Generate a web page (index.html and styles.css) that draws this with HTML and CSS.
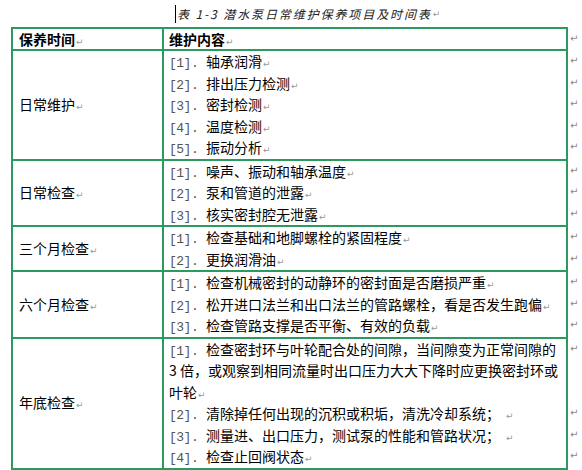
FILE: index.html
```html
<!DOCTYPE html>
<html>
<head>
<meta charset="utf-8">
<link rel="stylesheet" href="styles.css">
</head>
<body>
<div class="caption"><span class="cursor"></span><span class="cap-text">表 1-3 潜水泵日常维护保养项目及时间表</span><span class="pm">↵</span></div>
<table class="tbl">
  <colgroup><col class="c1"><col class="c2"><col class="c3"></colgroup>
  <tr class="head">
    <td class="k">保养时间<span class="pm">↵</span></td>
    <td class="v">维护内容<span class="pm">↵</span></td>
    <td class="m">↵</td>
  </tr>
  <tr>
    <td class="k">日常维护<span class="pm">↵</span></td>
    <td class="v">
      <p><span class="n">[1].</span>轴承润滑<span class="pm">↵</span></p>
      <p><span class="n">[2].</span>排出压力检测<span class="pm">↵</span></p>
      <p><span class="n">[3].</span>密封检测<span class="pm">↵</span></p>
      <p><span class="n">[4].</span>温度检测<span class="pm">↵</span></p>
      <p><span class="n">[5].</span>振动分析<span class="pm">↵</span></p>
    </td>
    <td class="m">↵<br>↵<br>↵<br>↵<br>↵</td>
  </tr>
  <tr>
    <td class="k">日常检查<span class="pm">↵</span></td>
    <td class="v">
      <p><span class="n">[1].</span>噪声、振动和轴承温度<span class="pm">↵</span></p>
      <p><span class="n">[2].</span>泵和管道的泄露<span class="pm">↵</span></p>
      <p><span class="n">[3].</span>核实密封腔无泄露<span class="pm">↵</span></p>
    </td>
    <td class="m">↵<br>↵<br>↵</td>
  </tr>
  <tr>
    <td class="k">三个月检查<span class="pm">↵</span></td>
    <td class="v">
      <p><span class="n">[1].</span>检查基础和地脚螺栓的紧固程度<span class="pm">↵</span></p>
      <p><span class="n">[2].</span>更换润滑油<span class="pm">↵</span></p>
    </td>
    <td class="m">↵<br>↵</td>
  </tr>
  <tr>
    <td class="k">六个月检查<span class="pm">↵</span></td>
    <td class="v">
      <p><span class="n">[1].</span>检查机械密封的动静环的密封面是否磨损严重<span class="pm">↵</span></p>
      <p><span class="n">[2].</span>松开进口法兰和出口法兰的管路螺栓，看是否发生跑偏<span class="pm">↵</span></p>
      <p><span class="n">[3].</span>检查管路支撑是否平衡、有效的负载<span class="pm">↵</span></p>
    </td>
    <td class="m">↵<br>↵<br>↵</td>
  </tr>
  <tr>
    <td class="k">年底检查<span class="pm">↵</span></td>
    <td class="v">
      <p><span class="n">[1].</span>检查密封环与叶轮配合处的间隙，当间隙变为正常间隙的<br>3 倍，或观察到相同流量时出口压力大大下降时应更换密封环或<br>叶轮<span class="pm">↵</span></p>
      <p><span class="n">[2].</span>清除掉任何出现的沉积或积垢，清洗冷却系统；<span class="pm sp">↵</span></p>
      <p><span class="n">[3].</span>测量进、出口压力，测试泵的性能和管路状况；<span class="pm sp">↵</span></p>
      <p><span class="n">[4].</span>检查止回阀状态<span class="pm">↵</span></p>
    </td>
    <td class="m">↵<br>&nbsp;<br>&nbsp;<br>↵<br>↵<br>↵</td>
  </tr>
</table>
</body>
</html>
```
FILE: styles.css
```css
html, body {
  margin: 0;
  padding: 0;
  background: #ffffff;
}
body {
  font-family: "Noto Sans CJK SC", "Liberation Sans", sans-serif;
  color: #000;
}
.caption {
  height: 27px;
  padding-left: 175px;
  display: flex;
  align-items: center;
  font-size: 12px;
  color: #222;
}
.cursor {
  display: inline-block;
  width: 1px;
  height: 18px;
  background: #000;
  margin-right: 1px;
}
.cap-text {
  font-style: italic;
  letter-spacing: 1.9px;
  line-height: 18px;
}
.tbl {
  margin-left: 11px;
  border-collapse: collapse;
  table-layout: fixed;
  width: 571px;
  font-size: 14px;
  line-height: 21.5px;
}
.c1 { width: 151px; }
.c2 { width: 404px; }
.c3 { width: 16px; }
.tbl td {
  padding: 0;
}
.tbl td.k, .tbl td.v {
  border: 2px solid #2a9a5e;
}
.tbl td.k {
  padding-left: 6px;
  vertical-align: middle;
}
.tbl td.v {
  padding-left: 5px;
  vertical-align: top;
}
.tbl td.m {
  border: none;
  vertical-align: top;
  padding-left: 2px;
  font-size: 10px;
  color: #8a8a8a;
  line-height: 21.5px;
  font-family: "DejaVu Sans", sans-serif;
}
.head td {
  font-weight: bold;
  line-height: 20px;
}
.head td.m { font-weight: normal; }
.tbl p {
  margin: 0;
}
.n {
  display: inline-block;
  width: 37px;
  color: #555;
  font-family: "Liberation Mono", monospace;
  font-size: 13px;
  letter-spacing: -0.5px;
  line-height: 13px;
}
.pm {
  font-family: "DejaVu Sans", sans-serif;
  font-size: 9px;
  color: #999;
  font-weight: normal;
  margin-left: 1px;
  line-height: 0;
}
.pm.sp { margin-left: 6px; }
```
